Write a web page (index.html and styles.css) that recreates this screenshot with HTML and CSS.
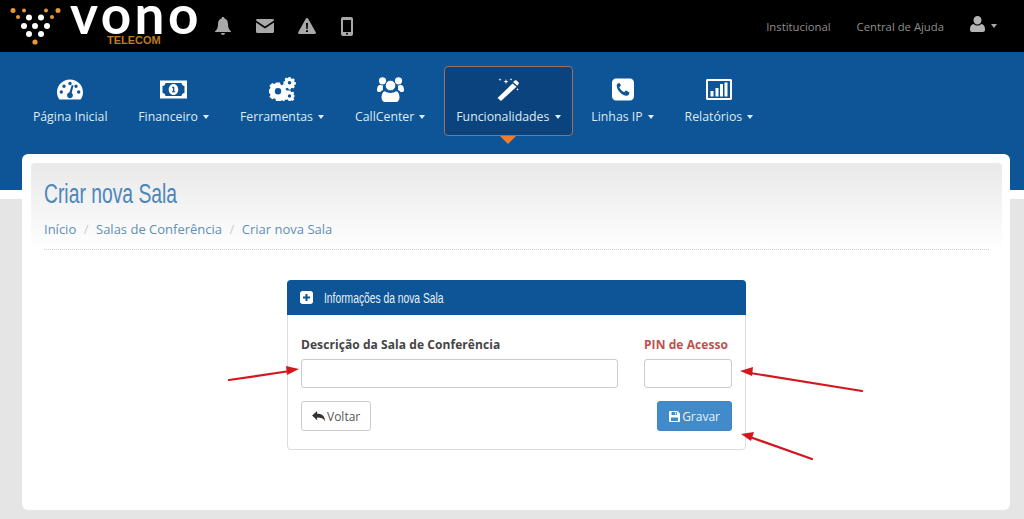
FILE: index.html
```html
<!DOCTYPE html>
<html lang="pt-BR">
<head>
<meta charset="utf-8">
<title>Criar nova Sala</title>
<link rel="stylesheet" href="styles.css">
</head>
<body>
<header class="topbar">
  <div class="brand">
    <svg class="brand-dots" viewBox="0 0 56 38" width="56" height="38">
      <g fill="#e8973a">
        <circle cx="3" cy="2.500" r="2.500"/><circle cx="14" cy="2.500" r="2"/><circle cx="36" cy="2.500" r="2"/><circle cx="48" cy="2.500" r="2.500"/>
        <circle cx="8" cy="9" r="2"/><circle cx="42" cy="9" r="2"/><circle cx="25" cy="34" r="2.600"/>
      </g>
      <g fill="#fff">
        <circle cx="19" cy="9.500" r="3"/><circle cx="31" cy="9.500" r="3"/><circle cx="14" cy="18" r="3"/><circle cx="25" cy="18" r="3"/><circle cx="37" cy="18" r="3"/><circle cx="19" cy="26" r="3"/><circle cx="31" cy="26" r="3"/>
      </g>
    </svg>
    <div class="brand-name">
      <span class="brand-vono">VONO</span>
      <span class="brand-telecom">TELECOM</span>
    </div>
  </div>
  <div class="alerts">
    <svg width="16" height="18" viewBox="0 0 16 18"><path fill="#a8a8a8" d="M8 0c1 0 1.500.6 1.500 1.500C12 2.300 13 4.500 13 7c0 4 1 5.500 3 7.500v.5H0v-.5C2 12.500 3 11 3 7c0-2.500 1-4.700 3.500-5.500C6.500.6 7 0 8 0zM6 16h4c0 1.200-.9 2-2 2s-2-.8-2-2z"/></svg>
    <svg width="18" height="14" viewBox="0 0 18 14"><path fill="#a8a8a8" d="M1.500 0h15c.8 0 1.500.6 1.500 1.400L9 7.500 0 1.400C0 .6.700 0 1.500 0zM0 3.500l9 6 9-6v9c0 .8-.7 1.500-1.500 1.500h-15C.7 14 0 13.300 0 12.500z"/></svg>
    <svg width="18" height="16" viewBox="0 0 18 16"><path fill="#a8a8a8" fill-rule="evenodd" d="M9 0c.5 0 .9.300 1.200.8l7.600 13.400c.5.900-.1 1.800-1 1.800H1.200c-.9 0-1.500-.9-1-1.800L7.800.8C8.100.300 8.500 0 9 0zM8 5l.3 6h1.400L10 5zm0 7.300V14h2v-1.700z"/></svg>
    <svg width="12" height="19" viewBox="0 0 12 19"><path fill="#a8a8a8" fill-rule="evenodd" d="M2 0h8c1.100 0 2 .9 2 2v15c0 1.100-.9 2-2 2H2c-1.100 0-2-.9-2-2V2C0 .9.900 0 2 0zm0 3v12h8V3zm4 12.700a1 1 0 1 0 0 2 1 1 0 0 0 0-2z"/></svg>
  </div>
  <nav class="toplinks">
    <a href="#">Institucional</a>
    <a href="#">Central de Ajuda</a>
    <a href="#" class="user">
      <svg width="15" height="16" viewBox="0 0 15 16"><path fill="#b4b4b4" d="M7.500 0a4 4 0 0 1 4 4.200c0 2.300-1.800 4.300-4 4.300s-4-2-4-4.300a4 4 0 0 1 4-4.200zM3.800 8c1 1 2.300 1.500 3.700 1.500S10.200 9 11.200 8C13.500 8.300 15 9.800 15 13v1c0 1.200-.9 2-2 2H2c-1.100 0-2-.8-2-2v-1c0-3.200 1.500-4.700 3.800-5z"/></svg>
      <i class="caret caret-grey"></i>
    </a>
  </nav>
</header>

<nav class="mainnav">
  <a class="navitem" href="#">
    <svg class="navicon" width="26" height="20" viewBox="0 0 26 20"><path fill="#fff" fill-rule="evenodd" d="M13 0c7.200 0 13 5.600 13 12.800 0 2.300-.6 4.400-1.700 6.300-.2.500-.7.900-1.300.9H3c-.6 0-1.100-.4-1.300-.9C.6 17.200 0 15.100 0 12.800 0 5.600 5.800 0 13 0zM13 2.300a1.700 1.700 0 1 0 0 3.400 1.700 1.700 0 0 0 0-3.400zM7 5a1.700 1.700 0 1 0 0 3.400A1.700 1.700 0 0 0 7 5zm12 0a1.700 1.700 0 1 0 0 3.400A1.700 1.700 0 0 0 19 5zM4.300 10.800a1.700 1.700 0 1 0 0 3.400 1.700 1.700 0 0 0 0-3.400zm17.400 0a1.700 1.700 0 1 0 0 3.400 1.700 1.700 0 0 0 0-3.400zM14.800 5.500l-2.400 7.600c-1.300.2-2.300 1.300-2.300 2.700 0 1.600 1.300 2.900 2.900 2.900s2.900-1.300 2.900-2.900c0-1-.5-1.800-1.200-2.300l1.800-7.600z"/></svg>
    <span class="navlabel">Página Inicial</span>
  </a>
  <a class="navitem" href="#">
    <svg class="navicon" width="27" height="18" viewBox="0 0 27 18"><path fill="#fff" fill-rule="evenodd" d="M0 0h27v18H0zM5.500 2.500C5.300 4.500 4 5.500 2.500 5.500v7c1.500 0 2.800 1 3 3h16c.2-2 1.500-3 3-3v-7c-1.500 0-2.800-1-3-3zM13.500 3.500c2.700 0 4.800 2.500 4.800 5.500s-2.100 5.500-4.800 5.500S8.700 12 8.700 9s2.100-5.500 4.800-5.500zM12 6.200v1.100h.9v3.400H12v1.100h3.200v-1.100h-.9V6.200z"/></svg>
    <span class="navlabel">Financeiro <i class="caret"></i></span>
  </a>
  <a class="navitem" href="#">
    <svg class="navicon" width="27" height="25" viewBox="0 0 27 25"><g fill="#fff"><path fill-rule="evenodd" d="M7 5.500h4l.5 2 1.500.7 1.800-1.100 2.800 2.800-1.100 1.800.7 1.500 2 .5v4l-2 .5-.7 1.500 1.100 1.800-2.800 2.800-1.800-1.100-1.500.7-.5 0H7l-.5-2-1.500-.7-1.800 1.100L.4 19.800l1.100-1.800-.7-1.500-.8-.2v-4l.8-.3.7-1.500L.4 8.700l2.800-2.800 1.800 1.100 1.500-.7zM9 11a3.200 3.200 0 1 0 0 6.400A3.200 3.200 0 0 0 9 11z"/><path fill-rule="evenodd" d="M20 0l1.300.2.300 1.400 1 .4 1.200-.7 1.500 1.500-.7 1.200.4 1 1.400.3v2.200l-1.400.3-.4 1 .7 1.200-1.500 1.500-1.200-.7-1 .4-.3 1.400h-2.200l-.3-1.400-1-.4-1.200.7-1.500-1.500.7-1.200-.4-1-1.400-.3V4.600l1.400-.3.4-1-.7-1.200 1.500-1.500 1.200.7 1-.4.300-1.400zM20 4a1.800 1.800 0 1 0 0 3.600A1.800 1.800 0 0 0 20 4z" transform="translate(.5 0)"/><path fill-rule="evenodd" d="M21 14.500h2l.3 1.300 1 .4 1.100-.7 1.400 1.400-.7 1.100.3 1 .6.100v2l-.6.200-.3 1 .7 1.100-1.400 1.400-1.100-.4-1 .1-.3.5h-2l-.3-1.300-1-.4-1.100.7-1.400-1.400.7-1.100-.4-1-1.200-.2v-2l1.200-.3.4-1-.7-1.100 1.400-1.400 1.100.7 1-.4zM22 18.300a1.700 1.700 0 1 0 0 3.400 1.700 1.700 0 0 0 0-3.400z" transform="translate(-1.500 -1)"/></g></svg>
    <span class="navlabel">Ferramentas <i class="caret"></i></span>
  </a>
  <a class="navitem" href="#">
    <svg class="navicon" width="27" height="25" viewBox="0 0 27 25"><g fill="#fff"><circle cx="5.500" cy="3.800" r="3.600"/><circle cx="21.500" cy="3.800" r="3.600"/><path d="M0 13c0-3 1-5 3.500-5.200 1 .6 1.700.8 2.700.8-.5 1.500-.5 3-.2 4.500-1 .4-2 1-2.700 1.900H1.500C.5 15 0 14.300 0 13zM27 13c0-3-1-5-3.500-5.200-1 .6-1.700.8-2.700.8.500 1.500.5 3 .2 4.500 1 .4 2 1 2.700 1.900h1.800c1 0 1.500-.7 1.500-2z"/><circle cx="13.500" cy="8.500" r="5.200" stroke="#0d5596" stroke-width=".8"/><path d="M8 14.200c1.400 1.100 3.500 1.700 5.500 1.700s4.100-.6 5.500-1.700c2.400.3 3.500 2.800 3.500 6.300 0 2.700-1.500 4.500-3.500 4.500H8c-2 0-3.500-1.800-3.500-4.500 0-3.500 1.100-6 3.500-6.300z"/></g></svg>
    <span class="navlabel">CallCenter <i class="caret"></i></span>
  </a>
  <a class="navitem navitem-active" href="#">
    <svg class="navicon" width="23" height="23" viewBox="0 0 23 23"><g fill="#fff"><path d="M15.500 5.500l4 3.200L4 23l-3.500-3z"/><path d="M16 4l1.800-1.500c.5-.4 1.200-.4 1.700 0l2 1.800c.5.500.5 1.200 0 1.700L20.300 7.800z"/><path d="M9 1l.6 2 2 .6-2 .6L9 6.300l-.6-2.100-2-.6 2-.6zM3 0l.4 1.200 1.100.4-1.100.4L3 3.200l-.4-1.200-1.100-.4 1.100-.4zM14 0l.4 1 1 .4-1 .4-.4 1-.4-1-1-.4 1-.4zM20.500 10l.4 1 1 .4-1 .4-.4 1-.4-1-1-.4 1-.4z"/></g></svg>
    <span class="navlabel">Funcionalidades <i class="caret"></i></span>
  </a>
  <a class="navitem" href="#">
    <svg class="navicon" width="22" height="22" viewBox="0 0 22 22"><path fill="#fff" fill-rule="evenodd" d="M4 0h14c2.200 0 4 1.800 4 4v14c0 2.200-1.800 4-4 4H4c-2.200 0-4-1.800-4-4V4C0 1.800 1.800 0 4 0zm3.500 4.500L5.700 5c-.7.500-1 1.200-1 2 .2 5 5 9.800 10 10.300.8 0 1.500-.3 2-1l.7-1.800c.1-.3 0-.6-.3-.7l-3-1.700c-.3-.1-.5 0-.7.200l-1.200 1.400c-2.200-1-4-2.800-5-5l1.400-1.200c.2-.2.300-.4.200-.7L7.800 4.700c-.1-.2-.1-.2-.3-.2z"/></svg>
    <span class="navlabel">Linhas IP <i class="caret"></i></span>
  </a>
  <a class="navitem" href="#">
    <svg class="navicon" width="26" height="21" viewBox="0 0 26 21"><path fill="#fff" fill-rule="evenodd" d="M1.500 0h23c.8 0 1.500.7 1.500 1.500v18c0 .8-.7 1.500-1.500 1.500h-23C.7 21 0 20.300 0 19.500v-18C0 .7.700 0 1.500 0zM2 2v17h22V2zM4.500 12h3v5.500h-3zM9.500 9h3v8.500h-3zM14 5h3v12.500h-3zM18.500 3.500h3v14h-3z"/></svg>
    <span class="navlabel">Relatórios <i class="caret"></i></span>
  </a>
</nav>

<div class="stage">
  <main class="card">
    <div class="pagehead">
      <h1 class="pagetitle">Criar nova Sala</h1>
      <ol class="crumbs">
        <li><a href="#">Início</a></li>
        <li><a href="#">Salas de Conferência</a></li>
        <li><a href="#">Criar nova Sala</a></li>
      </ol>
    </div>
    <section class="panel">
      <h2 class="panel-head">
        <svg width="13" height="13" viewBox="0 0 13 13"><path fill="#fff" fill-rule="evenodd" d="M2.500 0h8C11.900 0 13 1.100 13 2.500v8c0 1.400-1.100 2.500-2.500 2.500h-8C1.100 13 0 11.900 0 10.500v-8C0 1.100 1.100 0 2.500 0zm3 3v2.500H3v2h2.500V10h2V7.500H10v-2H7.500V3z"/></svg>
        <span class="panel-title">Informações da nova Sala</span>
      </h2>
      <form class="panel-body">
        <div class="field">
          <label class="field-label" for="desc">Descrição da Sala de Conferência</label>
          <input class="input" id="desc" type="text">
        </div>
        <div class="field">
          <label class="field-label field-label-red" for="pin">PIN de Acesso</label>
          <input class="input" id="pin" type="text">
        </div>
        <div class="actions">
          <button class="btn" type="button">
            <svg width="13" height="11" viewBox="0 0 14 12"><path fill="#333" d="M5.500 0v3C10 3 14 4.500 14 11.500c-1.300-3.200-4-4.300-8.500-4.300v3L0 5z"/></svg>
            Voltar
          </button>
          <button class="btn btn-primary" type="button">
            <svg width="11" height="11" viewBox="0 0 11 11"><path fill="#fff" fill-rule="evenodd" d="M1 0h7.500L11 2.500V10c0 .6-.4 1-1 1H1c-.6 0-1-.4-1-1V1c0-.6.400-1 1-1zm1.500 1v3h5.500V1zM6 1.500h1.200v2H6zM2 6.500V10h7V6.500z"/></svg>
            Gravar
          </button>
        </div>
      </form>
    </section>
  </main>
</div>

<svg class="arrows" width="1024" height="519" viewBox="0 0 1024 519">
  <g fill="#d2181e" stroke="#d2181e" stroke-width="2.200" stroke-linecap="round">
    <line x1="229" y1="380" x2="290" y2="371"/>
    <path stroke="none" d="M299 369l-13-3 1 9z"/>
    <line x1="862" y1="391" x2="750" y2="373"/>
    <path stroke="none" d="M740 371l13-4-1 9z"/>
    <line x1="812" y1="459" x2="750" y2="437"/>
    <path stroke="none" d="M741 434l13-2-3 9z"/>
  </g>
</svg>
</body>
</html>
```

FILE: styles.css
```css
* { box-sizing: border-box; }

html, body {
  margin: 0;
  height: 519px;
  overflow: hidden;
}

body {
  position: relative;
  font-family: "Open Sans", "Liberation Sans", sans-serif;
  background: #e5e5e5;
  color: #444;
}

a { text-decoration: none; color: inherit; }

/* top bar */
.topbar {
  height: 52px;
  background: #000;
  display: flex;
  align-items: center;
  padding: 0 27px 0 10px;
}

.brand {
  display: flex;
  align-items: flex-start;
  gap: 4px;
  height: 52px;
  padding-top: 8px;
  width: 198px;
}

.brand-dots { flex: none; }

.brand-name {
  position: relative;
  line-height: 1;
}

.brand-vono {
  display: block;
  margin-top: -8px;
  font-family: "Lato", sans-serif;
  font-weight: 700;
  font-size: 53px;
  line-height: 27px;
  height: 27px;
  letter-spacing: 3.500px;
  text-transform: lowercase;
  color: #fff;
}

.brand-telecom {
  display: block;
  margin: 9px 0 0 37px;
  font-family: "Liberation Sans", sans-serif;
  font-weight: 700;
  font-size: 11px;
  line-height: 9px;
  color: #bd7a1f;
}

.alerts {
  display: flex;
  align-items: center;
  gap: 24.500px;
  margin-left: 7px;
}

.toplinks {
  margin-left: auto;
  display: flex;
  align-items: center;
  gap: 26px;
  font-size: 11.300px;
  color: #8e8e8e;
}

.user { display: flex; align-items: center; gap: 6px; margin-bottom: 4px; }

.caret {
  display: inline-block;
  width: 0;
  height: 0;
  border-left: 3.500px solid transparent;
  border-right: 3.500px solid transparent;
  border-top: 4px solid #e4edf5;
  vertical-align: 2px;
  margin-left: 2px;
}

.caret-grey { border-top-color: #aaa; margin-left: 0; margin-top: 4px; }

/* main nav */
.mainnav {
  height: 138px;
  background: #0d5596;
  display: flex;
  align-items: flex-start;
  padding: 14px 0 0 17.500px;
}

.navitem {
  position: relative;
  height: 70px;
  margin: 0 3.400px;
  padding: 10px 11px 0;
  border: 1px solid transparent;
  border-radius: 4px;
  display: flex;
  flex-direction: column;
  align-items: center;
  color: #dfe9f3;
  font-size: 12.300px;
}

.navicon { height: 25px; }

.navlabel {
  margin-top: 6px;
  white-space: nowrap;
  line-height: 17px;
}

.navitem-active {
  background: #0a437e;
  border-color: #a0705f;
}

.navitem-active::after {
  content: "";
  position: absolute;
  left: 50%;
  bottom: -9px;
  margin-left: -8px;
  border-left: 8px solid transparent;
  border-right: 8px solid transparent;
  border-top: 8px solid #ee7d2d;
}

/* stage */
.stage {
  height: 329px;
  border-top: 9px solid #fff;
  padding: 0 14px 9px 22px;
}

.card {
  position: relative;
  height: 356px;
  margin-top: -45px;
  padding: 9px 8px 0 9px;
  background: #fff;
  border-radius: 6px;
}

.pagehead {
  height: 87px;
  padding: 14px 13px 0;
  background: linear-gradient(#e9e9e9, #fff);
  border-radius: 4px 4px 0 0;
  position: relative;
}

.pagehead::after {
  content: "";
  position: absolute;
  left: 13px;
  right: 13px;
  bottom: 0;
  border-bottom: 1px dotted #ccc;
}

.pagetitle {
  margin: 0;
  font-family: "Liberation Sans", sans-serif;
  font-weight: 400;
  font-size: 27px;
  line-height: 34px;
  color: #4c86b9;
  width: max-content;
  transform: scaleX(.715);
  transform-origin: left;
}

.crumbs {
  list-style: none;
  display: flex;
  margin: 9px 0 0;
  padding: 0;
  font-size: 13px;
  line-height: 18px;
  color: #5f8fb5;
}

.crumbs li + li::before {
  content: "/";
  color: #ccc;
  padding: 0 7.500px;
}

/* panel */
.panel {
  width: 459px;
  height: 170px;
  margin: 30px 0 0 256px;
  background: #fff;
  border: 1px solid #ddd;
  border-radius: 4px;
}

.panel-head {
  height: 35px;
  margin: -1px -1px 0;
  padding: 0 13px;
  display: flex;
  align-items: center;
  gap: 11px;
  background: #0d5596;
  border-radius: 4px 4px 0 0;
  color: #e8f0f7;
  font-family: "Liberation Sans", sans-serif;
  font-weight: 400;
  font-size: 14px;
}

.panel-title {
  transform: scaleX(.735);
  transform-origin: left;
  white-space: nowrap;
}

.panel-body {
  display: grid;
  grid-template-columns: 1fr 88px;
  column-gap: 26px;
  row-gap: 13px;
  padding: 21px 13px 0;
}

.field { display: flex; flex-direction: column; }

.field-label {
  font-size: 12px;
  font-weight: 700;
  letter-spacing: .07px;
  line-height: 18px;
  margin-bottom: 5px;
  color: #444;
}

.field-label-red { color: #c0504d; }

.input {
  height: 29px;
  width: 100%;
  border: 1px solid #ccc;
  border-radius: 3px;
  background: #fff;
}

.actions {
  grid-column: 1 / -1;
  display: flex;
  justify-content: space-between;
}

.btn {
  height: 30px;
  padding: 0 10px;
  display: flex;
  align-items: center;
  gap: 2px;
  font-family: inherit;
  font-size: 12px;
  color: #555;
  background: #fff;
  border: 1px solid #ccc;
  border-radius: 3px;
}

.btn-primary {
  padding: 0 11px;
  color: #e8f0f7;
  background: #428bca;
  border-color: #3f84c0;
}

.arrows {
  position: absolute;
  left: 0;
  top: 0;
  pointer-events: none;
}
```
